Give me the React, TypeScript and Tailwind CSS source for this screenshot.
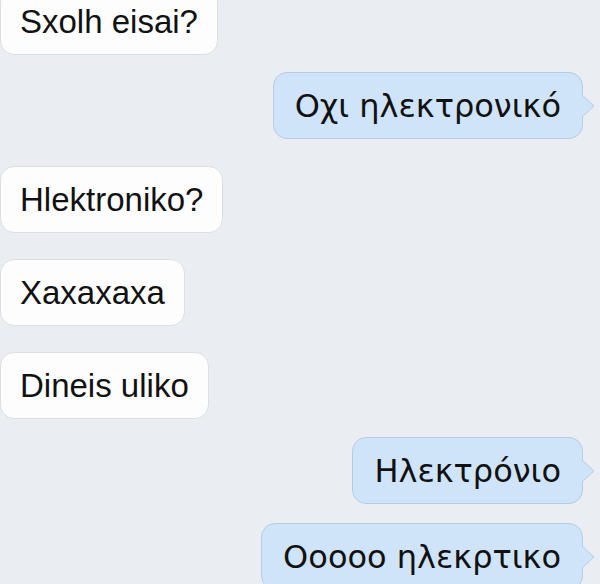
import React from "react";

type Msg = { text: string; mine?: boolean; mt: number };

const messages: Msg[] = [
  { text: "Sxolh eisai?", mt: -12 },
  { text: "Οχι ηλεκτρονικό", mine: true, mt: 17 },
  { text: "Hlektroniko?", mt: 27 },
  { text: "Xaxaxaxa", mt: 26 },
  { text: "Dineis uliko", mt: 26 },
  { text: "Ηλεκτρόνιο", mine: true, mt: 18 },
  { text: "Οοοοο ηλεκρτικο", mine: true, mt: 19 },
];

function Bubble({ text, mine }: { text: string; mine?: boolean }) {
  if (mine) {
    return (
      <div className="relative h-[67px] flex items-center px-[21px] rounded-[14px] bg-[#cfe4f9] border border-[#b3cde6] font-['DejaVu_Sans',sans-serif] text-[32px]">
        {text}
        {/* tail */}
        <svg
          className="absolute right-[-13px] top-1/2 -translate-y-1/2"
          width="14"
          height="24"
          viewBox="0 0 14 24"
        >
          <path d="M0 0 L13 12 L0 24 Z" fill="#cfe4f9" />
          <path d="M1 1 L13 12 L1 23" fill="none" stroke="#b3cde6" strokeWidth="1" />
        </svg>
      </div>
    );
  }
  return (
    <div className="h-[67px] flex items-center px-[19px] rounded-[14px] bg-[#fdfdfd] border border-[#dcdfe2]">
      {text}
    </div>
  );
}

export default function App() {
  return (
    <div className="w-[600px] h-[584px] overflow-hidden bg-[#eaeef2] text-[#111] text-[33px] leading-[38px] font-['Liberation_Sans',Arial,sans-serif]">
      <div className="flex flex-col">
        {messages.map((m, i) => (
          <div
            key={i}
            className={m.mine ? "flex justify-end pr-[17px]" : "flex justify-start"}
            style={{ marginTop: m.mt }}
          >
            <Bubble text={m.text} mine={m.mine} />
          </div>
        ))}
      </div>
    </div>
  );
}
